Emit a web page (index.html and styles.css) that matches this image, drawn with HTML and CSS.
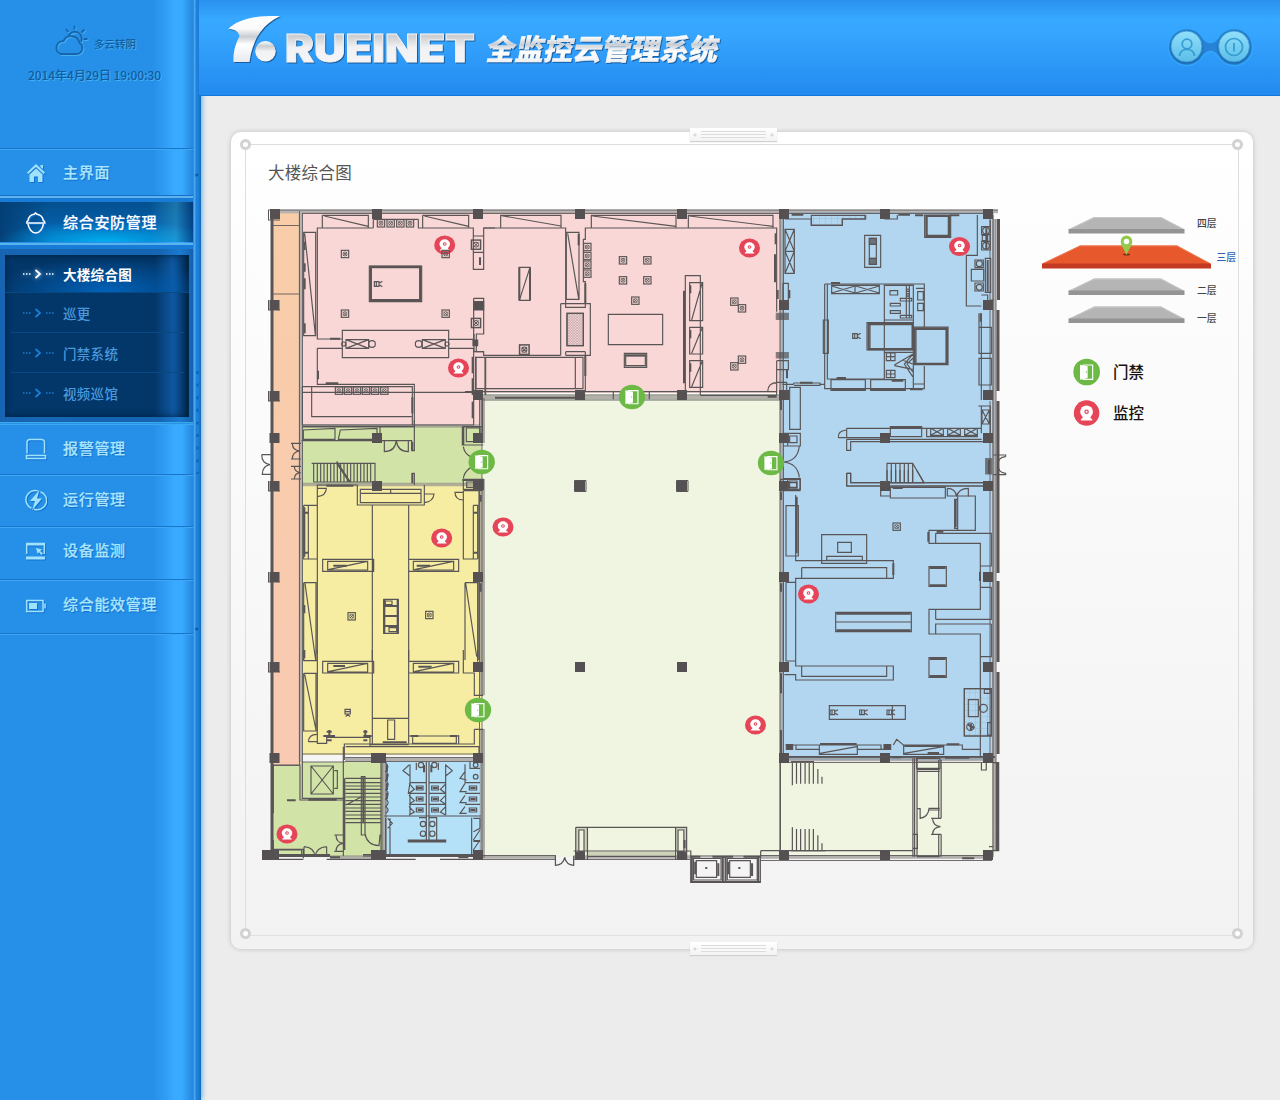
FILE: index.html
```html
<!DOCTYPE html>
<html lang="zh-CN">
<head>
<meta charset="utf-8">
<title>RUEINET 全监控云管理系统</title>
<link rel="stylesheet" href="styles.css">
</head>
<body>
<svg class="sprite" width="0" height="0">
  <defs>
    <g id="camera"><circle class="cam-bg" r="31"/><circle cy="-3" r="15.5" fill="#fff"/><path d="M-9 8H9L10 13Q15 14 14 18H-14Q-15 14-10 13Z" fill="#fff"/><circle class="cam-eye" cy="-3" r="4"/></g>
    <g id="door"><circle class="door-bg" r="40"/><path d="M-12-21H18V22H-12" fill="none" stroke="#fff" stroke-width="3.5"/><path d="M-20-22 3-17V18L-20 23Z" fill="#fff"/><circle class="door-bg" cx="-1" cy="0" r="2"/></g>
    <g id="xb"><rect x="-11" y="-11" width="22" height="22"/><path stroke-width="2.4" d="M-6-6 6 6M6-6-6 6M-6 0A6 6 0 1 1 6 0A6 6 0 1 1-6 0"/></g>
    <g id="seat"><path d="M-12-7H2V7H-12ZM4-3 12-8M4 3 12 8M-6-7V7"/></g>
    <rect id="col" x="-5" y="-5" width="10" height="10"/>
    <linearGradient id="metal" x1="0" y1="0" x2="0" y2="1"><stop offset="0" stop-color="#fff"/><stop offset=".28" stop-color="#fafafa"/><stop offset=".45" stop-color="#c9cdd2"/><stop offset=".62" stop-color="#fff"/><stop offset="1" stop-color="#e6e9ee"/></linearGradient>
    <linearGradient id="metal2" x1="0" y1="0" x2="0" y2="1"><stop offset="0" stop-color="#fff"/><stop offset=".25" stop-color="#cbcdd0"/><stop offset=".5" stop-color="#f2f2f4"/><stop offset="1" stop-color="#f6f6f8"/></linearGradient>
    <linearGradient id="btn" x1="0" y1="0" x2="0" y2="1"><stop offset="0" stop-color="#92e0fa"/><stop offset="1" stop-color="#5bbde9"/></linearGradient>
    <linearGradient id="corridor" x1="0" y1="0" x2="0" y2="1"><stop offset="0" stop-color="#f8cda8"/><stop offset="1" stop-color="#f8cab2"/></linearGradient>
    <pattern id="tiles" width="18" height="18" patternUnits="userSpaceOnUse"><path d="M0 0H18M0 0V18" stroke="#86a6bd" stroke-width="1.5"/></pattern>
    <pattern id="mesh" width="8" height="8" patternUnits="userSpaceOnUse"><path d="M0 0 8 8M8 0 0 8" stroke="#7d7475" stroke-width="1"/></pattern>
  </defs>
</svg>
<div class="app">
  <aside class="side">
    <nav class="nav">
      <div class="status">
        <div class="weather">
          <svg width="36" height="31" viewBox="0 0 36 31" class="weather-icon"><g><path d="M8 28.5H24.500A6 6 0 0 0 27 17.500A8.500 8.500 0 0 0 11 15.500A6.800 6.800 0 0 0 8 28.500Z"/><path d="M16 10A7 7 0 1 1 28.500 16.500M22 0V4M13.500 3.500 16 6.500M32 4 29 7M35 13.500H31"/></g></svg>
          <span>多云转阴</span>
        </div>
        <div class="clock">2014年4月29日 19:00:30</div>
      </div>
      <a class="item home"><svg viewBox="0 0 22 22"><path class="fill" d="M11 2 20 10.500 18.700 12 11 5 3.300 12 2 10.500ZM15.500 3H18V7L15.500 5ZM4.500 12.500 11 6.500 17.500 12.500V20H13V14.500H9V20H4.500Z"/></svg><span>主界面</span></a>
      <a class="item active"><svg viewBox="0 0 22 22"><path d="M1 11H20.500M3 9C3 5 6 2.500 9 2.200L10.500 1 12 2.200C15 2.500 18.300 5 18.300 9M3 12C3.500 16.500 7 21 10.700 21S18 16.500 18.300 12M1.500 10 3 8.500M20 10 18.500 8.500"/></svg><span>综合安防管理</span></a>
      <div class="submenu"><div class="subbox">
        <a class="sub on"><svg viewBox="0 0 32 12"><path class="dots" d="M1 6H9M24 6H32"/><path d="M13.500 2 18 6 13.500 10"/></svg><span>大楼综合图</span></a>
        <a class="sub"><svg viewBox="0 0 32 12"><path class="dots" d="M1 6H9M24 6H32"/><path d="M13.500 2 18 6 13.500 10"/></svg><span>巡更</span></a>
        <a class="sub"><svg viewBox="0 0 32 12"><path class="dots" d="M1 6H9M24 6H32"/><path d="M13.500 2 18 6 13.500 10"/></svg><span>门禁系统</span></a>
        <a class="sub"><svg viewBox="0 0 32 12"><path class="dots" d="M1 6H9M24 6H32"/><path d="M13.500 2 18 6 13.500 10"/></svg><span>视频巡馆</span></a>
      </div></div>
      <a class="item alarm"><svg viewBox="0 0 22 22"><path d="M2 15.500V4.500Q2 1.500 5 1.500H16Q19.500 1.500 19.500 4.500V15.500M1.500 17.500H20.500V20.500H1.500Z"/></svg><span>报警管理</span></a>
      <a class="item run"><svg viewBox="0 0 22 22"><path d="M13 1.900A9.300 9.300 0 0 0 6.500 19.300M9 20.200A9.300 9.300 0 0 0 15.500 2.700"/><path class="fill" d="M14.500 1 5 12H10L7 21.500 17 9.500H12Z"/></svg><span>运行管理</span></a>
      <a class="item device"><svg viewBox="0 0 22 22"><path d="M1.700 14V3.500H19.300V14"/><path class="fill" d="M1 3H20V5.500H1ZM1 16.500H20V19.500H1ZM11 8 17 9.500 15.200 11 18 13.500 16.500 15 14 12.200 12.700 14Z"/></svg><span>设备监测</span></a>
      <a class="item energy"><svg viewBox="0 0 22 22"><path d="M1.700 6.500H18V17.500H1.700ZM20 9.500V14.500"/><path class="fill" d="M4 9H12V15H4Z"/></svg><span>综合能效管理</span></a>
    </nav>
    <svg class="rail" viewBox="0 0 8 1100"><g class="rivets"><circle cx="4" cy="175" r="2"/><circle cx="4" cy="629" r="2"/></g><path class="slots" d="M4.500 371V474"/></svg>
  </aside>
  <main class="main">
    <header class="top">
      <svg class="brand" width="500" height="66" viewBox="225 10 500 66">
        <path fill="url(#metal)" d="M228.300 29C237 19.500 256 14.500 280 16.300C263 24 252.500 39 249.500 62H233.500C233 51 236 43 239.500 36C238.500 31.500 234 29 228.300 29Z"/>
        <circle cx="265.500" cy="51.300" r="10.300" fill="url(#metal2)"/>
        <text class="latin" x="285" y="61.500" textLength="190" lengthAdjust="spacingAndGlyphs">RUEINET</text>
        <text class="han" transform="translate(485 59.500) skewX(-11)" x="0" y="0" textLength="232" lengthAdjust="spacingAndGlyphs">全监控云管理系统</text>
      </svg>
      <svg class="tools" width="92" height="44" viewBox="1165 25 92 44">
        <path class="well" d="M1187 28.500A18.500 18.500 0 0 1 1203 38Q1210.500 47 1218 38A18.500 18.500 0 1 1 1218 56Q1210.500 47 1203 56A18.500 18.500 0 1 1 1187 28.500Z"/>
        <circle class="knob" cx="1186.500" cy="46.500" r="15.500"/><circle class="knob" cx="1234" cy="46.500" r="15.500"/>
        <g class="glyph"><circle cx="1187" cy="44" r="4.800"/><path d="M1179.500 56C1180 51 1183 49.500 1187 49.500S1194 51 1194.500 56"/><circle cx="1234" cy="47" r="8.500"/><path d="M1234 43V51.500"/></g>
      </svg>
    </header>
    <section class="card">
      <i class="handle up"></i><i class="handle down"></i>
      <i class="ring tl"></i><i class="ring tr"></i><i class="ring bl"></i><i class="ring br"></i>
      <div class="frame">
        <h1>大楼综合图</h1>
        <div class="body">
          <svg class="plan" width="755" height="690" viewBox="255 200 755 690">
            <g class="areas">
              <path fill="url(#corridor)" d="M273 213H300V765H273Z"/>
              <path fill="#f9d7d6" d="M302 212H780V393H483V425H302Z"/>
              <path fill="#d2e3a8" d="M302 426H482V484H302ZM272 766H299V762H384V857H272Z"/>
              <path fill="#f6eda3" d="M302 484H481V755H302Z"/>
              <path fill="#b4e0f8" d="M385 762H481V857H385Z"/>
              <path fill="#b2d6f0" d="M782 212H994V760H782Z"/>
              <path fill="#f0f5e1" d="M483 394H780V762H995V857H483Z"/>
            </g>
            <g class="walls">
              <path class="dark" d="M272 210V858M998.500 219V300M998 310V391M998 401V573M998 581V662M998 672V754M997.500 763V850M262 855.500H330M363 855.500H482"/>
              <path class="soft" d="M270 211.500H998M781.500 212V762M481.500 398V443M481.500 479V695M481.500 729V858M345 759.500H482M782 759.500H996M483 397.500H780M302 426H482M302 484.500H482M482 857H556M573 857H690M760 857H992M994 219V850M330 857H385M300.500 212V762M384 760V857"/>
              <path class="thin" d="M268 210H998M302 213.500H780M299.500 211V765M302.500 213V762M484 398V443M484 479V695M484 729V858M479.500 398V443M479.500 479V756M482 398V858M780 212V762M783.500 212V762M990 219V300H994M990 310V391M990 401V573M990 581V662M990 672V754M993 215V857M996 219V850M780 762V855M345 757.500H482M345 761.500H482M783 757.500H995M783 762.500H995M483 400H780M482 395H780M302 754H480M302 762H345M273 765.500H299M272 225.500H299M272 294H299M482 855.500H556M482 859.500H556M573 859.500H690M760 855.500H992M760 860.500H992M783 213.500H990M386 761V857M382 761V857"/>
            </g>
            <g class="cols">
              <use href="#col" x="275" y="214"/><use href="#col" x="377" y="214"/><use href="#col" x="478" y="214"/><use href="#col" x="580" y="214"/><use href="#col" x="682" y="214"/><use href="#col" x="784" y="214"/><use href="#col" x="885" y="214"/><use href="#col" x="988" y="214"/>
              <use href="#col" x="274.500" y="305"/><use href="#col" x="784" y="305"/><use href="#col" x="988" y="305"/>
              <use href="#col" x="274.500" y="396"/><use href="#col" x="478" y="395"/><use href="#col" x="580" y="395"/><use href="#col" x="682" y="395"/><use href="#col" x="784" y="395"/><use href="#col" x="988" y="395"/>
              <use href="#col" x="274.500" y="438"/><use href="#col" x="377" y="438"/><use href="#col" x="478" y="438"/><use href="#col" x="784" y="438"/><use href="#col" x="885" y="438"/><use href="#col" x="988" y="438"/>
              <use href="#col" x="274.500" y="486"/><use href="#col" x="377" y="486"/><use href="#col" x="478" y="486"/><use href="#col" x="580" y="486"/><use href="#col" x="682" y="486"/><use href="#col" x="784" y="486"/><use href="#col" x="885" y="486"/><use href="#col" x="988" y="486"/>
              <use href="#col" x="274.500" y="577"/><use href="#col" x="478" y="577"/><use href="#col" x="784" y="577"/><use href="#col" x="988" y="577"/>
              <use href="#col" x="274.500" y="667"/><use href="#col" x="478" y="667"/><use href="#col" x="580" y="667"/><use href="#col" x="682" y="667"/><use href="#col" x="784" y="667"/><use href="#col" x="988" y="667"/>
              <use href="#col" x="274.500" y="758"/><use href="#col" x="376" y="758"/><use href="#col" x="381" y="758"/><use href="#col" x="478" y="758"/><use href="#col" x="784" y="758"/><use href="#col" x="885" y="758"/><use href="#col" x="988" y="758"/>
              <use href="#col" x="267" y="855"/><use href="#col" x="274" y="855"/><use href="#col" x="376" y="855"/><use href="#col" x="381" y="855"/><use href="#col" x="478" y="855"/><use href="#col" x="580" y="855"/><use href="#col" x="682" y="855"/><use href="#col" x="784" y="855"/><use href="#col" x="885" y="855"/><use href="#col" x="988" y="855"/>
              <path class="thin" d="M574.500 480.500H586V491.500H574.500ZM676.500 480.500H688V491.500H676.500ZM268.500 210V220M268.500 300V310M268.500 391V401M268.500 481V491M268.500 572V582M268.500 662V672M268 220H280M268 310H280M268 401H280M268 491H280M268 582H280M268 672H280"/>
            </g>
            <!-- north-west hall -->
            <g class="draw" transform="translate(255 200) scale(.33333)">
              <path d="M187 417V84H355M490 58V84H655V208H686V84H720M202 46H340V84M202 46V84M208 48 340 79M503 46H641V84M503 46V84M508 48 641 79M355 58H490M355 58V84M146 97H182V407H146ZM149 100 181 404M187 97V417H262M656 108H686M656 157H686M343 198H500V305H343ZM349 203H494V299H349ZM262 391H581V473H262ZM273 419H341V445H273ZM273 419 341 445M341 419 273 445M502 419H571V445H502ZM502 419 571 445M571 419 502 445M581 418H656M187 445H262M581 445H656V580M187 445V553H478V675M142 577H656M170 560V650H470M142 560H472V675M142 675H656V580M656 295H686V402H664V455H686M656 295V402M662 470V570M690 472V585M656 395V430M682 580V720M142 560V675"/>
              <path class="thick" d="M347 200H496V303H347ZM225 416H255M212 550H250M189 512V538M149 125V150M149 190V215M149 235V268M149 370V400M653 470V520M653 535V585M653 605V655M675 172V195M472 592V640"/>
              <path class="solid" d="M656 305H686V330H656ZM654 420H668V437H654Z"/>
              <circle cx="351" cy="432" r="10"/><circle cx="491" cy="432" r="10"/><circle cx="266" cy="432" r="6"/><circle cx="576" cy="432" r="6"/>
              <use href="#seat" x="370" y="252"/>
              <use href="#xb" x="270" y="162"/><use href="#xb" x="270" y="341"/><use href="#xb" x="572" y="341"/><use href="#xb" x="378" y="70"/><use href="#xb" x="407" y="70"/><use href="#xb" x="436" y="70"/><use href="#xb" x="465" y="70"/><use href="#xb" x="252" y="572"/><use href="#xb" x="279" y="572"/><use href="#xb" x="306" y="572"/><use href="#xb" x="333" y="572"/><use href="#xb" x="360" y="572"/><use href="#xb" x="388" y="572"/><use href="#xb" transform="translate(663 134) scale(1.250)"/><use href="#xb" transform="translate(663 369) scale(1.250)"/>
            </g>
            <!-- north-centre halls -->
            <g class="draw" transform="translate(465 200) scale(.33333)">
              <path d="M107 84V46H288V84M110 47 288 78M56 84H302V322H361V245H355V118H361V84H935V335M379 84V46H633V84M382 48 633 79M670 84V46H924V84M673 48 924 79M304 97H342V298H304ZM308 100 341 296M163 202H195V301H163ZM195 202 163 301M287 311H376V466H302M287 311V466M302 322V311M306 340H355V437H306ZM27 402V455H56V466H287M33 472H354V566H33ZM62 472V585M331 472V566M361 455V575M302 455H361M302 455V466M430 343H593V434H430ZM478 460H545V502H478ZM482 468H541V497H482ZM661 570V227H706V585M674 248H713V362H674ZM674 382H713V462H674ZM674 482H713V562H674ZM711 250 680 360M711 385 680 460M711 485 680 560M0 575H935M935 482V585M445 575V598M553 575V598M908 575Q908 548 938 547H965V585M935 509H970V482H935M954 250H970V304H954ZM706 586H935"/>
              <path class="thick" d="M163 202V301M195 202V301M657 272V550M932 100V133M930 163V247M938 270V297M361 250V310M361 466V528M480 466H543M341 102V136M676 256V280M676 390V415M676 490V515M90 593H330M966 508V535M908 590H935"/>
              <path class="solid" d="M934 340H970V358H934ZM934 458H970V474H934Z" opacity=".7"/>
              <rect x="306" y="340" width="49" height="97" fill="url(#mesh)"/>
              <use href="#xb" x="367" y="141"/><use href="#xb" x="367" y="168"/><use href="#xb" x="367" y="194"/><use href="#xb" x="367" y="221"/><use href="#xb" x="474" y="181"/><use href="#xb" x="547" y="181"/><use href="#xb" x="474" y="241"/><use href="#xb" x="547" y="241"/><use href="#xb" x="511" y="302"/><use href="#xb" x="808" y="305"/><use href="#xb" x="831" y="325"/><use href="#xb" x="831" y="479"/><use href="#xb" x="808" y="499"/><use href="#xb" transform="translate(178 449) scale(1.300)"/>
            </g>
            <!-- north-east hall -->
            <g class="draw" transform="translate(765 200) scale(.33333)">
              <path fill="url(#tiles)" d="M139 46H300V57H232V76H139Z"/>
              <path d="M60 57H139V76H232V57H302V45M360 45V57H397V45M60 88H88V220H60ZM60 154H88M60 88 88 154M88 88 60 154M60 154 88 220M88 154 60 220M299 106H347V202H299ZM313 115H334V193H313ZM313 133H334M313 175H334M479 45H557V112H479ZM486 48H550V106H486ZM637 45V166H604V318H649M649 340V600M649 285H668V320M650 80H676V104H650ZM650 124H676V150H650ZM652 106H668V122H652ZM619 208H656V243H619ZM630 180H655V203H630ZM630 249H655V273H630ZM661 175H677V277H661ZM676 60V150"/>
              <path d="M179 252H478V383M179 252V566H478V498M187 252V537H358V256H445V565M187 276V252M200 256H343V281H200ZM270 256V281M200 258 270 279M270 258 200 279M272 258 343 279M343 258 272 279M175 360H190V460H175ZM358 360H443M306 368H445V450H306ZM315 374H442V446H315ZM445 381H549V494H445ZM453 388H543V490H453ZM375 272H398V285H375ZM376 310H406V318H376ZM376 332H406V340H376ZM406 295H440V303H406ZM406 346H440V354H406ZM424 258V354M433 258V354M453 265H476M458 275H475V300H458ZM458 310H475V332H458ZM358 457H443M364 459H390V482H364ZM364 511H390V533H364ZM377 459V482M364 470H390M377 511V533M364 522H390M388 495 443 463M388 497 443 508M443 463 418 492 443 530M443 475 426 492 443 515M412 480 443 492M198 539H301V571H198ZM317 539H421V571H317ZM478 552H445M642 382H679V460H642ZM642 475H679V555H642ZM642 340V382M651 630H673V672H651ZM651 630 673 672M673 630 651 672M640 618H676V710"/>
              <path d="M74 562H106V688H74ZM52 553H85L87 549H165V556H87M165 553H180M245 685H648M245 685V713H362M220 713Q218 692 245 690M220 713H245M376 680H470V710H376ZM485 685V710H637V685M497 685H535V706H497ZM548 685H586V706H548ZM599 685H637V706H599ZM497 685 535 706M535 685 497 706M548 685 586 706M586 685 548 706M599 685 637 706M637 685 599 706M245 718V751H257V725H655M245 718H650M245 820V858H655M245 820H257V848H655M366 849V790H443L477 849H366M379 790V848M392 790V848M405 790V848M418 790V848M430 790V848M443 790V848M68 700H106V738H68ZM74 708H96V728H74ZM68 836H106V868H68ZM74 843H96V864H74ZM103 738Q98 784 55 786Q98 790 103 832M685 765H722V770M685 824H722V818M722 770Q697 772 700 795Q698 818 722 820M55 700H68M55 738H106M55 836H68M649 618V700"/>
              <path class="thick" d="M484 48H552V110H484ZM311 371H443V448H311ZM449 385H546V492H449ZM80 44H115M400 44H435M450 46H475M555 46H583M198 249H225M215 534H243M380 542H415M435 568H473M105 548H143M200 568H300M318 568H420M664 85V150M647 340V365M376 681H470M73 270V295M48 600V630M668 180V275M672 780V822"/>
              <path class="solid" d="M313 115H334V133H313ZM313 175H334V193H313ZM662 776H680V822H662Z" opacity=".75"/>
              <use href="#seat" x="275" y="408"/><circle cx="663" cy="92" r="10"/><circle cx="663" cy="137" r="10"/><circle cx="643" cy="191" r="9"/><circle cx="643" cy="262" r="9"/><circle cx="429" cy="271" r="4"/><circle cx="429" cy="285" r="4"/>
            </g>
            <!-- west stair lobby and exhibition hall -->
            <g class="draw" transform="translate(255 420) scale(.33333)">
              <path d="M145 30 240 25V58H145ZM250 58 256 30 366 25V58ZM142 20H480M478 0V92H470V62H140M375 22V62M470 160H478V195M388 62V95Q420 95 424 62Q428 95 460 95V62M622 20H683M622 20V75H685M634 24H675V65H634ZM625 80Q630 115 683 120M625 175Q630 140 683 130M170 130H360V185M176 130V186M187 130V186M197 130V186M207 130V186M217 130V186M227 130V186M237 130V186M247 130V186M257 130V186M267 130V186M277 130V186M287 130V186M297 130V186M307 130V186M317 130V186M327 130V186M337 130V186M347 130V186M175 186H360M245 124 285 186M20 104H52M20 163H52M20 104Q20 130 45 134Q22 138 22 163M108 70H138M108 117H138M108 139H138M108 177H138M112 70Q112 92 135 93Q112 95 112 117M118 139Q118 156 137 158Q118 160 118 177"/>
              <path d="M187 700V195H307V255H508V195M316 208H498V248H316ZM318 220H497M407 208V220M187 230Q213 228 214 205H187M508 248Q535 245 537 222H508M625 240Q600 240 600 217H625M352 255V720M461 255V720M625 212V417H668M625 212H672V720M146 256H187M146 256V417H187M160 256V417M655 256H668V417M655 256V417M203 418H356V454H203ZM218 424H338V450H218ZM220 449 337 424M475 424H596V450H475ZM461 418H611V454H461ZM478 449 595 424M146 488H183V720M146 488V720M150 490 182 720M630 488H668V720M630 488V720M632 490 665 710M386 538H430V640H386ZM386 558H430M386 588H430M386 618H430M391 543H411V554H391ZM402 623H425V635H402ZM625 178H685V208H625ZM635 186H670V202H635Z"/>
              <path class="thick" d="M245 128 283 184M148 262V410M214 197H295M235 437H275M485 437H525M388 588H428M388 540V640M428 540V640M388 558H428M388 618H428M354 420V453M472 66V90M472 160V190M148 555V580M148 690V715M625 20V75M622 180H685M148 278H160M148 398H160M655 278H668M655 398H668M677 490V515M677 225V245"/>
              <use href="#xb" x="290" y="589"/><use href="#xb" x="523" y="585"/>
            </g>
            <!-- south-west rooms -->
            <g class="draw" transform="translate(255 650) scale(.33333)">
              <path d="M146 0V32H187M187 0V280H215V262H345V284H461M203 34H356V69H203ZM218 40H338V66H218ZM220 65 337 40M461 34H611V69H461ZM475 40H596V66H475ZM478 65 595 40M146 70H187M146 70V243H187M183 70V243M149 73 183 240M352 0V205H461M461 0V280M398 210H419V268H398ZM352 205V284M461 258H604V282H611V255M473 262V280H604M160 275Q162 252 187 253M160 275H187M625 0V69H658V136H685M668 0V35M658 238H685M658 238V282H268V330M272 290H672V312M345 290V262"/>
              <path d="M55 490V345H135V450H265M142 335V445H265V335M168 348H235V432H168ZM168 348 235 432M235 348 168 432M238 362H247V415H238M265 290V618M271 385H378M271 398H378M271 408H378M271 418H378M271 430H378M271 441H378M271 452H378M271 463H378M271 474H378M271 484H378M271 495H378M271 506H378M271 518H378M319 380H330V555H319ZM273 465 320 440M330 550Q335 585 372 587L375 555H378M55 570V598H145V625M147 590V618M215 590V618M147 590Q178 592 180 620Q184 592 215 590M238 555H265M238 604H265M243 555Q243 578 265 580Q243 582 243 604M62 600H140V618H62ZM378 335V600M48 628H145M215 628H482M555 628H680"/>
              <path d="M388 498H678M514 335V570M522 335V570M460 570H572V576H460ZM465 343V398H514M522 398H572V343M465 398 460 430H514M522 430H572V398M465 430V463H514M522 463H572V430M465 463V495M572 463V495M462 345 444 362 465 378M572 345 592 362 572 378M462 400 478 418 462 430M462 436 478 452 462 463M462 470 478 486 462 495M572 402 556 418 572 430M572 436 556 452 572 463M572 470 556 486 572 495M630 398H675M630 430H675M630 463H675M630 343V398M630 365 615 385 635 390M630 400 615 425 635 425M630 436 615 458 635 458M630 470 615 490 635 490M484 408H504V420H484ZM484 441H504V453H484ZM484 474H504V486H484ZM530 408H550V420H530ZM530 441H550V453H530ZM530 474H550V486H530ZM643 408H665V420H643ZM643 441H665V453H643ZM643 474H665V486H643ZM492 503H514V570H492M522 503H545V570M650 503V618M405 505V618M392 505V618M655 505H675V535L655 545M655 570 675 540M655 600 675 570M392 340Q405 348 392 365Q407 372 392 392Q407 400 392 420Q407 428 392 448Q407 456 392 470Q407 480 392 490M645 335V355H675M398 505 412 520 398 535M484 338V360M550 338V360"/>
              <path class="thick" d="M215 245H230M215 271H230M325 245H337M325 271H337M223 240V258M331 240V258M96 451H122M160 449H245M268 385V600M325 382V520M235 48H270M490 50H530M383 277H455M467 258H490M585 258H608M507 345V367M529 345V367M396 345V365M396 372V392M396 400V420M396 428V448M460 573H572M655 573H675M225 622H255M610 622H640M205 258H240M325 258H350M486 410V418M533 414H548M488 414H502M488 447H502M488 480H502M533 447H548M533 480H548M646 414H662M646 447H662M646 480H662"/>
              <circle cx="504" cy="522" r="8"/><circle cx="504" cy="551" r="8"/><circle cx="532" cy="522" r="8"/><circle cx="532" cy="551" r="8"/><circle cx="498" cy="345" r="8"/><circle cx="538" cy="345" r="8"/><circle cx="662" cy="380" r="7"/><circle cx="662" cy="345" r="7"/>
              <path d="M270 178H286V192H270ZM272 200 278 193 285 200M270 185H286"/>
            </g>
            <!-- south-east hall -->
            <g class="draw" transform="translate(765 470) scale(.33333)">
              <path d="M245 10H257V38H655M245 10V48H655M366 0V38M379 0V38M392 0V38M405 0V38M418 0V38M430 0V38M443 0V38M455 0 477 38M347 48V78H376M376 52H541V84H376ZM547 55Q572 55 575 80Q580 55 610 55V80M547 55V78H631V181H492V220H646V418H492V492H646V860M578 80V181M569 88H578V175H569ZM512 190H679V288H646M512 190V220M512 448V420M679 352V448H512M646 352H679M679 462H512V492M679 462V560H646M63 107H100V258H63ZM92 75V272H385V325H92V588H385V630H92V614H58M170 194H305V280H170ZM218 217H259V247H218ZM185 259H292V271H185ZM110 293H365V323M110 293V323M365 293V323M63 337H92M63 337V573H92M110 588H365V619H110ZM365 588H385M212 427H439V485H212ZM212 456H439M492 290H544V349H492ZM492 563H544V622H492ZM193 707H421V748H193ZM382 707V748M62 825H93V838H165M93 825H348V838H365M275 838H365M385 825 395 808 415 825H592V838H646M163 825H277V853H163ZM165 850 275 830M416 825H536V853H416ZM418 850 535 830M47 28H105V62H47ZM68 38H95V52H68ZM55 860H690M455 865H525V895H455ZM55 340V570"/>
              <path fill="url(#tiles)" d="M598 656H679V798H598Z"/>
              <path d="M598 656H679V798H598ZM610 689H640V740H610ZM658 658H675V670H658ZM668 758H679V795H668Z"/>
              <path class="thick" d="M214 431H437M214 481H437M494 294H542M494 346H542M494 567H542M494 618H542M383 54H413M515 185H535M490 186V215M385 280V315M572 90V172M95 80V250M165 822H275M545 823H583M418 828H535M380 862H410M465 862H512M540 863H613M48 65V90M48 340V365M48 610V670M48 780V850M645 305V333M488 849H522"/>
              <path class="solid" d="M64 824H83V838H64ZM357 824H377V838H357Z"/>
              <circle cx="655" cy="715" r="12"/><circle cx="616" cy="770" r="11"/><path class="thick" d="M608 764 628 774M618 762V780"/>
              <use href="#xb" x="395" y="170"/><use href="#seat" x="207" y="727"/><use href="#seat" x="296" y="727"/><use href="#seat" x="378" y="727"/>
            </g>
            <!-- south entrance and lifts -->
            <g class="draw" transform="translate(480 740) scale(.34439 .33333)">
              <path fill="#cdd3b8" stroke="none" d="M312 335H568V349H312ZM278 264H312V335H278ZM568 264H600V335H568Z"/>
              <path fill="#f0f5e1" d="M287 270H302V335H287ZM575 270H592V335H575Z"/>
              <path d="M278 262H600V360M278 262V360M312 262V360M568 262V360M272 333H612V350M312 349H568M219 348V376Q242 374 246 352Q250 374 272 376V348M872 68V332M815 332H1257M815 332V350M903 65H970M907 68V136M919 68V131M931 68V131M944 68V131M956 68V131M968 68V131M981 87V131M993 110V131M907 262V332M919 267V332M931 267V332M944 267V332M956 267V332M968 267V332M981 286V332M993 310V332M903 333H1003M1257 55V350M1262 55V350M1269 55V350M1269 88H1335M1269 94H1335M1332 60V235M1339 60V235M1269 206H1278V235Q1302 230 1304 205H1335M1304 210H1335M1310 235H1339M1310 283H1339M1314 235Q1315 258 1337 260Q1315 262 1314 283M1332 283V350M1339 283V350M1269 350H1335M1257 283H1270V325H1257M1272 66H1330M1490 68H1506V332H1490M1456 68V90H1470V68M1478 320H1490"/>
              <path fill="#f4f4f4" d="M612 348H814V427H612Z"/><path d="M620 355H700V420H620ZM628 362H687V412H628ZM718 355H805V420H718ZM725 362H785V412H725ZM612 425H814"/>
              <path class="thick" d="M612 350H640M675 350H735M765 350H814M615 350V427M705 350V427M713 350V427M808 350V427M625 365V403M692 370V408M720 365V403M790 370V408M594 300V325M1400 355H1435M654 384H660M750 384H756M657 381V387M753 381V387"/>
            </g>
            <g class="pins">
              <use href="#camera" transform="translate(444.700 245) scale(.34 .31)"/><use href="#camera" transform="translate(458.500 368) scale(.34 .31)"/><use href="#camera" transform="translate(749.500 248) scale(.34 .31)"/><use href="#camera" transform="translate(959.500 246.500) scale(.34 .31)"/><use href="#camera" transform="translate(441.700 538) scale(.34 .31)"/><use href="#camera" transform="translate(503 527) scale(.34 .31)"/><use href="#camera" transform="translate(808.500 594) scale(.34 .31)"/><use href="#camera" transform="translate(755.500 725) scale(.34 .31)"/><use href="#camera" transform="translate(287 834) scale(.34 .31)"/>
              <use href="#door" transform="translate(632 397) scale(.33 .305)"/><use href="#door" transform="translate(481.700 462) scale(.33 .305)"/><use href="#door" transform="translate(771 463) scale(.33 .305)"/><use href="#door" transform="translate(478 710) scale(.33 .305)"/>
            </g>
            <g class="draw" transform="translate(255 200) scale(.33333)"><use href="#xb" x="572" y="162"/></g>
          </svg>
          <div class="info">
            <svg class="floors" width="222" height="135" viewBox="1017 200 222 135">
              <g id="slab"><path fill="#b5b5b5" d="M1068.500 229.500 1094 217H1161L1184.500 229.500Z"/><path d="M1069 229.500 1094.500 217.500H1161L1184 229.500" fill="none" stroke="#c9c9c9"/><path fill="#949494" d="M1068.500 229H1184.500V233.500H1068.500Z"/></g>
              <use href="#slab" y="61.500"/><use href="#slab" y="89.500"/>
              <path fill="#e7582d" d="M1042 264 1080 245.500H1177L1211 264Z"/><path d="M1043 263.500 1080 246H1177L1210 263.500" fill="none" stroke="#f07a55"/><path fill="#c43a23" d="M1042 263.500H1211V268.500H1042Z"/>
              <ellipse cx="1126.500" cy="254.500" rx="3.500" ry="1" fill="#7a3015"/>
              <path fill="#94c94b" d="M1126.500 235.500A5.800 5.800 0 0 1 1132.300 241.500C1132.300 245 1128.500 250 1126.500 255C1124.500 250 1120.700 245 1120.700 241.500A5.800 5.800 0 0 1 1126.500 235.500Z"/><circle cx="1126.500" cy="241.500" r="2.700" fill="#fff"/>
              <text x="1197" y="227">四层</text><text class="cur" x="1216.500" y="261">三层</text><text x="1197" y="294">二层</text><text x="1197" y="322">一层</text>
            </svg>
            <div class="key"><svg width="28" height="28" viewBox="-41 -42 84 84"><use href="#door"/></svg><span>门禁</span></div>
            <div class="key"><svg width="28" height="28" viewBox="-33 -34 68 68"><use href="#camera"/></svg><span>监控</span></div>
          </div>
        </div>
      </div>
    </section>
  </main>
</div>
</body>
</html>
```
FILE: styles.css
```css
* { box-sizing: border-box; }
body { margin: 0; background: #ececec; font-family: "Noto Sans CJK SC", sans-serif; }
.sprite { position: absolute; }
.app { display: flex; width: 1280px; height: 1100px; overflow: hidden; }
.side { display: flex; width: 201px; flex: none; position: relative; z-index: 2; box-shadow: 1px 0 5px #5eaee5; }
.nav { width: 193px; display: flex; flex-direction: column; background: linear-gradient(90deg, #2690e9 0, #2690e9 153px, #319df5 166px, #38aaff 174px, #38aaff 182px, #2789df 192px, #2587df); }
.rail { width: 8px; height: 1100px; background: linear-gradient(90deg, #1873c6 0, #4ba7ef 1px, #4ba7ef 2px, #1c82db 3px, #1c82db 5px, #1a78ce 6px, #1569b9 8px); }
.rivets { fill: #0c5aa5; stroke: #249ae0; stroke-width: .6; }
.slots { stroke: #1068b8; stroke-width: 2.500; stroke-dasharray: 3 9.600; }

.status { height: 148px; padding: 24px 0 0 54px; color: #125d9f; text-shadow: 1px 1px 0 #43aef0; }
.weather { display: flex; align-items: center; height: 34px; gap: 4px; font-size: 10.500px; font-weight: 500; }
.weather span { padding-top: 5px; }
.weather-icon { fill: none; stroke: #1766ad; stroke-width: 1.900; filter: drop-shadow(1px 1px 0 #43aef0); transform: translate(-1.500px, -.500px); }
.clock { margin: 8px 0 0 -26px; font-size: 12px; line-height: 18px; white-space: nowrap; letter-spacing: -.090px; font-weight: 500; }

.item { display: flex; align-items: center; padding-left: 25px; gap: 16px; color: #a9e5fc; font-size: 15px; font-weight: 500; letter-spacing: .700px; border-top: 1px solid #1975cd; box-shadow: inset 0 1px #3aa8f3; text-shadow: 1px 1px 1px #126bc9; white-space: nowrap; }
.item span { padding-bottom: 3px; -webkit-text-stroke: .200px; }
.item svg { width: 22px; height: 22px; flex: none; filter: drop-shadow(1px 1px 0 #126fd3); }
.item path { fill: none; stroke: #9ee2fb; stroke-width: 1.500; }
.item path.fill { fill: #9ee2fb; stroke: none; }
.home { height: 47px; }
.home svg { margin-top: 2px; }
.home span { padding-bottom: 1px; }
.active { height: 54px; color: #fff; border: 0; padding: 7px 0 6px 25px; box-shadow: inset 0 1px #1570c7, inset 0 3px #60b2ef, inset 0 7px #187cd7, inset 0 -4px #187cd7, inset 0 -6px #58b3ef; position: relative; z-index: 0; }
.active::before { content: ""; position: absolute; z-index: -1; inset: 7px 0 7px; background: linear-gradient(90deg, transparent 150px, rgba(80,200,230,.3) 176px, rgba(0,30,90,.45)), radial-gradient(ellipse 110px 22px at 55% 100%, #00aeef, transparent), linear-gradient(90deg, #033f75, transparent 50px), linear-gradient(#04508f, #0569bb); }
.active path { stroke: #fff; }
.active span { padding-bottom: 2px; }
.submenu { height: 174px; padding: 6px 4px 5px 5px; background: linear-gradient(90deg, #1765b2, #1565b3 160px, #1b7ad1 180px, #1461ae); border-bottom: 1px solid #39a9ee; }
.subbox { height: 162px; background: linear-gradient(90deg, transparent 150px, rgba(16,93,170,.85) 168px, rgba(16,93,170,.6) 172px, #022b53 182px), #033769; box-shadow: inset 0 0 7px #011f3d; }
.sub { display: flex; align-items: center; height: 40px; margin: 0 5px 0 6px; padding-left: 11px; gap: 9px; font-size: 13.500px; font-weight: 500; letter-spacing: .300px; color: #4a99dc; border-bottom: 1px solid #0b4881; }
.sub:last-child { border: 0; }
.sub svg { width: 32px; height: 12px; fill: none; stroke: #1d7ed0; stroke-width: 1.800; }
.sub .dots { stroke-dasharray: 1.500 1.500; stroke-width: 1.300; }
.sub.on { height: 38px; margin: 0; padding-left: 17px; color: #fff; font-weight: 700; background: radial-gradient(ellipse 110px 34px at 55% 100%, rgba(0,101,190,.95), transparent); }
.sub.on svg { stroke: #fff; filter: drop-shadow(0 0 2px #9cd6ff); }
.alarm { height: 51px; border-top-color: #2a92e2; }
.run { height: 52px; padding-bottom: 1px; }
.device { height: 53px; padding-bottom: 4px; }
.energy { height: 54px; box-shadow: inset 0 1px #3aa8f3, 0 1px #1975cd, 0 2px #3aa8f3; padding-bottom: 3px; }

.main { flex: 1; min-width: 0; }
.top { position: relative; z-index: 3; display: flex; justify-content: space-between; height: 96px; margin-left: -2px; padding: 10px 23px 0 26px; background: linear-gradient(#2a90ef, #37a8ff 19px, #35a5fe 35px, #248bf0 92px); border-bottom: 1px solid #1477d8; }
.brand { filter: drop-shadow(1px 1.500px .5px rgba(20,73,130,.75)); }
.latin { font: 900 38px Inter, sans-serif; fill: url(#metal2); stroke: #f1f1f3; stroke-width: .9; }
.han { font: 900 29px "Noto Sans CJK SC", sans-serif; fill: url(#metal); stroke: #f4f4f6; stroke-width: .3; }
.tools { margin-top: 15px; }
.well { fill: #2882d5; stroke: #35a7fb; stroke-width: 1.500; }
.knob { fill: url(#btn); stroke: #3996d2; stroke-width: .8; filter: drop-shadow(0 1px 1px #125b9b); }
.glyph { fill: none; stroke: #359bd3; stroke-width: 1.700; }

.card { position: relative; width: 1022px; height: 817px; margin: 36px 0 0 30px; padding: 12px 14px 13px; border-radius: 10px; background: linear-gradient(#fff, #f2f2f2); box-shadow: 0 0 5px #bcbcbc; }
.frame { height: 100%; border: 1px solid #dedede; border-bottom-color: #e2e2e2; }
.ring { position: absolute; width: 11px; height: 11px; border: 3px solid #d2d2d2; border-radius: 50%; background: #fff; }
.tl { left: 9px; top: 7px; } .tr { right: 10px; top: 7px; } .bl { left: 9px; bottom: 10px; } .br { right: 10px; bottom: 10px; }
.handle { position: absolute; left: 459px; width: 87px; height: 13px; background: repeating-linear-gradient(#dcdcdc 0 1px, #fafafa 1px 3px) 11px 3px / 65px 7px no-repeat, radial-gradient(circle at 5px 7px, #dadada 1px, transparent 2px), radial-gradient(circle at 82px 7px, #dadada 1px, transparent 2px), linear-gradient(#fff, #f3f3f3); box-shadow: 0 1px 1px #d0d0d0; }
.up { top: -4px; } .down { bottom: -6px; }
h1 { margin: 14px 0 0 22px; height: 28px; font-size: 16.500px; line-height: 26px; font-weight: 400; letter-spacing: .300px; color: #555; }
.body { display: flex; margin: 13px 0 0 9px; }
.plan { flex: none; }
.areas { stroke: none; }
.walls, .draw { fill: none; stroke: #595556; }
.walls .dark { stroke-width: 3; }
.walls .soft { stroke-width: 3.500; stroke: #8f8c8a; opacity: .65; }
.walls .thin { opacity: .85; }
.thin { stroke-width: 1; fill: none; stroke: #595556; }
.draw { stroke-width: 3.500; }
.draw .thick { stroke-width: 6; }
.draw .solid, .cols { fill: #555152; }
.cam-bg { fill: #e64558; } .cam-eye { fill: none; stroke: #e64558; stroke-width: 3; }
.door-bg { fill: #6cb945; }
.info { flex: 1; margin-left: 7px; white-space: nowrap; }
.floors { display: block; margin-bottom: 23px; }
.floors text { font-size: 9.800px; font-weight: 500; fill: #444; }
.floors .cur { fill: #2d62b2; }
.key { display: flex; align-items: center; gap: 12px; height: 28px; margin: 0 0 13px 56px; font-size: 15.500px; font-weight: 500; color: #17110f; }
.key span { line-height: 22px; padding-bottom: 2px; }
```
